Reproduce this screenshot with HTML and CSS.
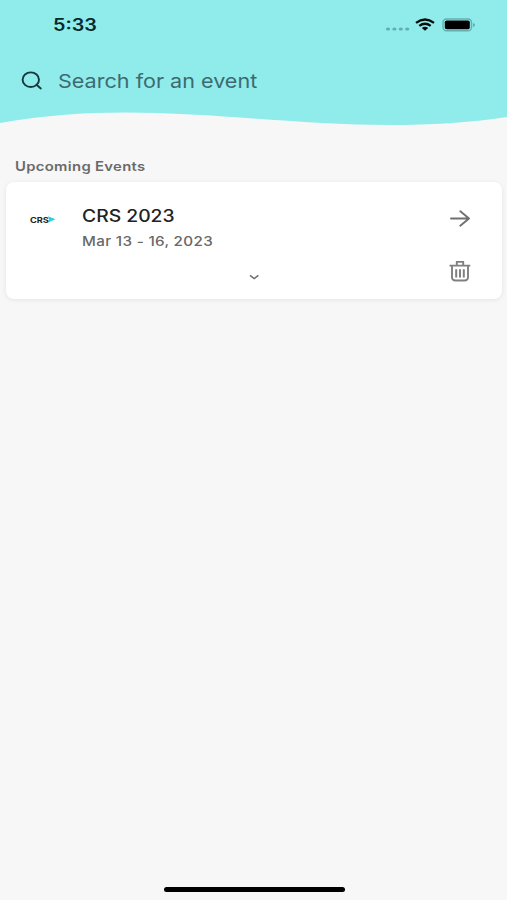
FILE: index.html
```html
<!DOCTYPE html>
<html lang="en">
<head>
<meta charset="utf-8">
<title>Upcoming Events</title>
<link rel="stylesheet" href="styles.css">
</head>
<body>
<div class="screen">
  <header class="header">
    <svg class="wave" viewBox="0 0 507 130" width="507" height="130" aria-hidden="true"><path d="M0 0H507V117C470 122.8 430 125 390 125C300 125 215 112.5 125 112.5C85 112.5 40 115.5 0 123Z" fill="#8feceb"/></svg>
    <div class="status">
      <span class="time"><span class="wide">5:33</span></span>
      <svg class="signal" width="26" height="6" viewBox="0 0 26 6" fill="#62adb0"><ellipse cx="3" cy="3" rx="2.1" ry="1.6"/><ellipse cx="9.4" cy="3" rx="2.1" ry="1.6"/><ellipse cx="15.8" cy="3" rx="2.1" ry="1.6"/><ellipse cx="22.2" cy="3" rx="2.1" ry="1.6"/></svg>
      <svg class="wifi" width="20" height="13" viewBox="0 0 20 13" fill="none" stroke="#050b0c" stroke-width="2.3"><path d="M1 4.8Q10-1.9 19 4.8M4.3 7.9Q10 3.7 15.7 7.9"/><path d="M6.8 10Q10 7.7 13.2 10L10 12.7Z" fill="#050b0c" stroke="none"/></svg>
      <svg class="battery" width="34" height="14" viewBox="0 0 34 14"><rect x="1" y="1" width="28.5" height="11.8" rx="3.5" fill="none" stroke="#65adae" stroke-width="1.4"/><rect x="2.8" y="2.5" width="25" height="8.8" rx="1.8" fill="#000"/><path d="M31 4.9Q33 5.4 33 6.9T31 8.9Z" fill="#65adae"/></svg>
    </div>
    <div class="search">
      <svg width="22" height="20" viewBox="0 0 22 20" fill="none" stroke="#16383d" stroke-width="1.9" stroke-linecap="round"><ellipse cx="9.8" cy="8.7" rx="8.2" ry="7.3"/><path d="M15.5 13.8L19.8 17.5"/></svg>
      <span class="hint"><span class="wide">Search for an event</span></span>
    </div>
  </header>
  <main class="events">
    <h1 class="heading"><span class="wide">Upcoming Events</span></h1>
    <article class="card">
      <div class="logo">
        <span class="logo-name"><span class="wide">CRS</span></span>
        <svg width="8" height="7" viewBox="0 0 8 7"><path d="M0 .2L7.5 3.3L0 6.5L1 3.3Z" fill="#25d5d5"/></svg>
      </div>
      <div class="details">
        <h2 class="title"><span class="wide">CRS 2023</span></h2>
        <p class="date"><span class="wide">Mar 13 - 16, 2023</span></p>
        <svg class="chevron" width="12" height="8" viewBox="0 0 12 8" fill="none" stroke="#6c6c6c" stroke-width="1.4"><path d="M2 2.4L6.2 5.6L10.4 2.4"/></svg>
      </div>
      <div class="actions">
        <svg width="22" height="18" viewBox="0 0 22 18" fill="none" stroke="#707070" stroke-width="1.9" stroke-linecap="round" stroke-linejoin="round"><path d="M2 8.5H20M11.3 1.3L20 8.5L11.3 15.7"/></svg>
        <svg width="22" height="22" viewBox="0 0 22 22" fill="none" stroke="#808080" stroke-width="1.9"><path d="M.5 5.6H21.3M7.8 5.5V1.9H14.2V5.5M3 6V17.3Q3 20.5 6.6 20.5H15.4Q19 20.5 19 17.3V6"/><path d="M7.2 9.3V17.4M11 9.3V17.4M14.8 9.3V17.4" stroke-width="2"/></svg>
      </div>
    </article>
  </main>
  <div class="home-bar"></div>
</div>
</body>
</html>
```
FILE: styles.css
```css
* { box-sizing: border-box; }
body { margin: 0; background: #f7f7f7; font-family: Inter, "Liberation Sans", sans-serif; }
.screen { width: 507px; height: 900px; display: flex; flex-direction: column; overflow: hidden; }
.header { position: relative; height: 130px; flex: none; padding-top: 14px; }
.wave { position: absolute; left: 0; top: 0; }
.status, .search { position: relative; display: flex; align-items: center; }
.status { height: 21px; padding: 0 31px 0 53px; }
.wide { display: inline-block; transform-origin: left center; white-space: nowrap; }
.time { flex: 1; padding-top: 1px; font-size: 16.8px; font-weight: 600; line-height: 21px; color: #06292c; }
.time .wide { transform: scaleX(1.18); }
.signal { margin: 8px 4px 0 0; }
.wifi { margin-right: 7px; }
.search { height: 30px; margin-top: 31px; padding-left: 21px; gap: 15px; }
.hint { padding-top: 2px; font-size: 19px; line-height: 30px; color: #3d6a70; }
.hint .wide { transform: scaleX(1.135); }
.events { flex: 1; padding: 27px 5px 0 6px; }
.heading { margin: 0 0 6px 9px; font-size: 12.8px; line-height: 19px; font-weight: 600; color: #6a6a6a; }
.heading .wide { transform: scaleX(1.16); letter-spacing: .27px; }
.card { height: 117px; display: flex; background: #fff; border-radius: 8px; box-shadow: 0 1px 5px rgba(0, 0, 0, .08); }
.logo { width: 76px; padding: 34px 0 0 24px; display: flex; align-items: flex-start; }
.logo-name { width: 18px; font-size: 8px; line-height: 8px; font-weight: 700; color: #222; }
.logo-name .wide { transform: scaleX(1.15); }
.details { flex: 1; padding-top: 23px; }
.title { margin: 0; font-size: 16.8px; line-height: 22px; font-weight: 500; color: #222; }
.title .wide { transform: scaleX(1.15); }
.date { margin: 4px 0 0; font-size: 13px; line-height: 20px; font-weight: 500; color: #686868; }
.date .wide { transform: scaleX(1.17); letter-spacing: .28px; }
.chevron { display: block; margin: 22px 0 0 166px; }
.actions { width: 53px; padding-top: 28px; display: flex; flex-direction: column; gap: 32px; }
.home-bar { width: 181px; height: 5px; margin: 0 auto 8px 164px; border-radius: 3px; background: #000; }
```
